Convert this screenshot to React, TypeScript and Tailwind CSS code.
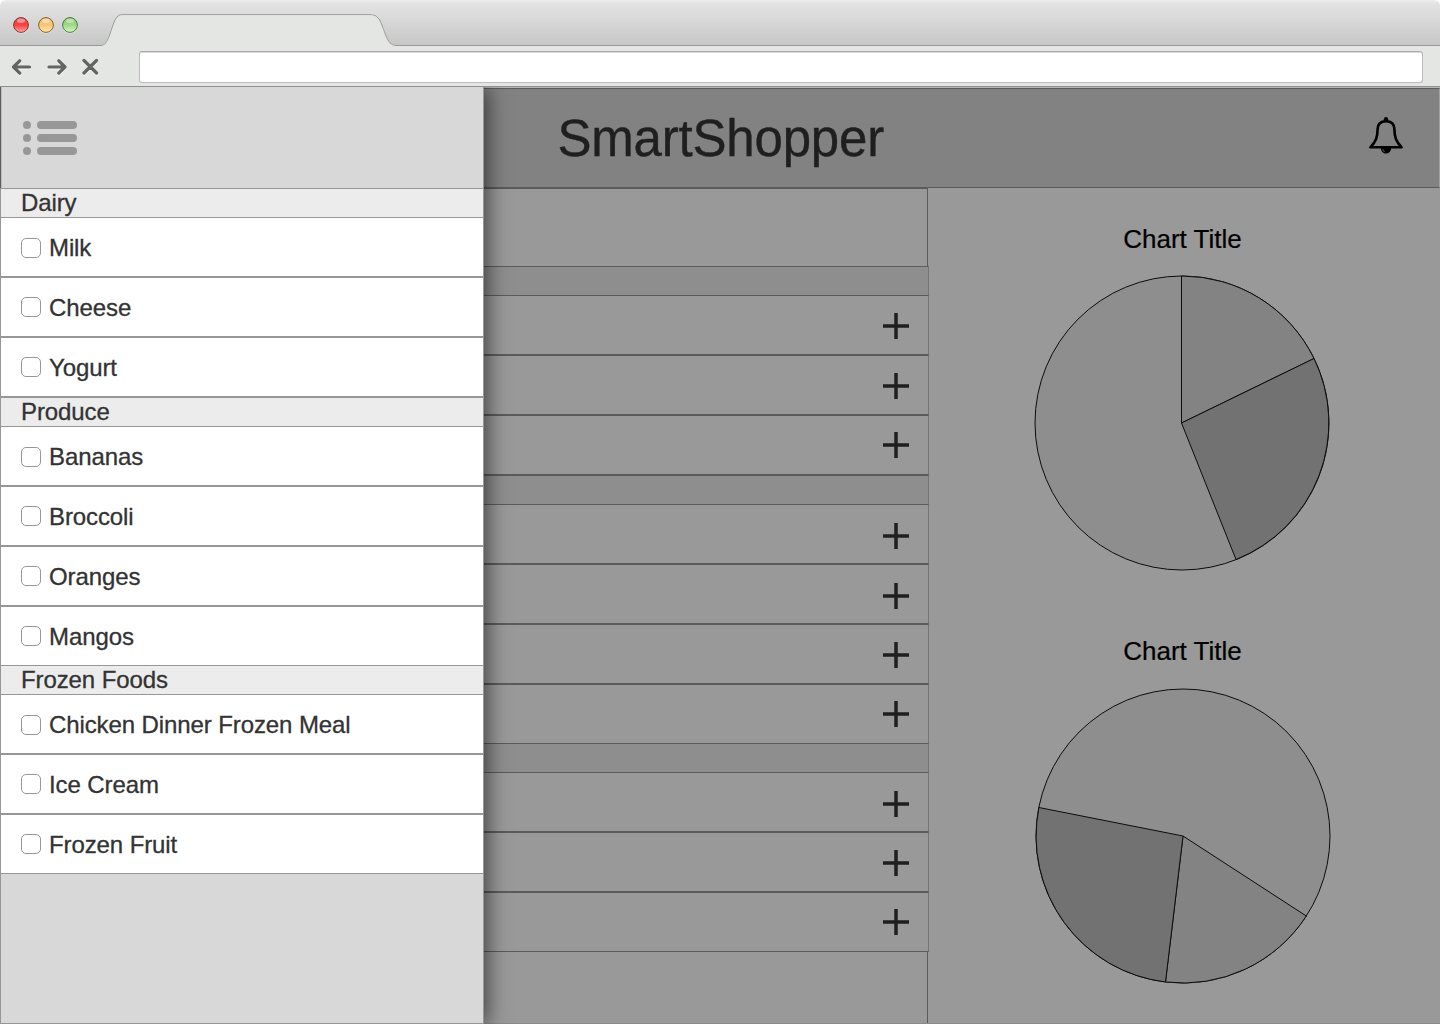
import React from "react";

type Section = { title: string; items: string[] };

const sections: Section[] = [
  { title: "Dairy", items: ["Milk", "Cheese", "Yogurt"] },
  { title: "Produce", items: ["Bananas", "Broccoli", "Oranges", "Mangos"] },
  { title: "Frozen Foods", items: ["Chicken Dinner Frozen Meal", "Ice Cream", "Frozen Fruit"] },
];

// Distance from the top of each catalog row to its add button.
const catalog: number[][] = [
  [17.5, 17.5, 16.5],
  [18.5, 18, 17.5, 16],
  [18, 17, 16],
];

function TrafficLight({ id, edge, top, mid, low }: { id: string; edge: string; top: string; mid: string; low: string }) {
  return (
    <svg width="18" height="18" viewBox="0 0 18 18">
      <defs>
        <linearGradient id={id} x1="0" y1="0" x2="0" y2="1">
          <stop offset="0" stopColor={top} />
          <stop offset="0.5" stopColor={mid} />
          <stop offset="1" stopColor={low} />
        </linearGradient>
      </defs>
      <circle cx="9" cy="10" r="7.6" fill="#fff" opacity="0.6" />
      <circle cx="9" cy="9" r="7.4" fill={`url(#${id})`} stroke={edge} strokeWidth="1" />
      <ellipse cx="9" cy="4.8" rx="4" ry="2.2" fill="#fff" opacity="0.4" />
    </svg>
  );
}

function BrowserChrome() {
  return (
    <div className="flex h-[87px] shrink-0 flex-col">
      <div className="relative flex h-[46px] items-center bg-white">
        <svg className="absolute inset-0" width="1440" height="46" viewBox="0 0 1440 46">
          <defs>
            <linearGradient id="titlebar" x1="0" y1="0" x2="0" y2="1">
              <stop offset="0" stopColor="#ececec" />
              <stop offset="0.08" stopColor="#e3e3e3" />
              <stop offset="1" stopColor="#c6c6c6" />
            </linearGradient>
          </defs>
          <path d="M0 46V6Q0 0 6 0H1434Q1440 0 1440 6V46Z" fill="url(#titlebar)" />
          <path
            d="M0 45.5H101C110 45.5 111 24 117 17Q118.600 14.700 122 14.700H371Q376 14.700 379 19C385 29 386 45.500 396 45.500H1440"
            fill="none"
            stroke="#999"
          />
          <path d="M101 46C110 46 112 24 117.500 17.500Q119 15.300 122 15.300H371Q375.500 15.300 378.500 19.500C384.500 29 385.500 46 396 46Z" fill="#e4e6e3" />
        </svg>
        <div className="relative ml-3 mt-[3px] flex gap-[6.500px]">
          <TrafficLight id="red" edge="#843434" top="#e05050" mid="#f93f3f" low="#ffabab" />
          <TrafficLight id="amber" edge="#80602f" top="#eebb72" mid="#fac675" low="#ffe6ad" />
          <TrafficLight id="green" edge="#4a7a3d" top="#8cc376" mid="#9fd889" low="#d5f8be" />
        </div>
      </div>
      <div className="flex h-[41px] items-center border-b border-[#8f8f8f] bg-[#e4e6e3] pl-3">
        <svg className="mt-[2px]" width="88" height="20" viewBox="12 57 88 20" fill="none" stroke="#646464" strokeWidth="3.200" strokeLinecap="round" strokeLinejoin="round">
          <g stroke="#fff" transform="translate(0 1)" opacity="0.7">
            <path d="M29.500 67H14M19.700 60.800L13.500 67L19.700 73.200M49 67H64.500M58.800 60.800L65 67L58.800 73.200M84 60.500L96.500 73M96.500 60.500L84 73" />
          </g>
          <path d="M29.500 67H14M19.700 60.800L13.500 67L19.700 73.200M49 67H64.500M58.800 60.800L65 67L58.800 73.200M84 60.500L96.500 73M96.500 60.500L84 73" />
        </svg>
        <div className="ml-[39px] mt-px h-8 w-[1284px] rounded-[3px] border border-[#bcbcbc] border-t-[#adadad] bg-white shadow-[inset_0_1px_0_#d8d8d8]" />
      </div>
    </div>
  );
}

function Drawer() {
  return (
    <aside className="relative z-10 flex w-[484px] shrink-0 flex-col shadow-[3px_1px_20px_rgba(0,0,0,0.6)]">
      <div className="flex h-[101px] border-l border-r border-l-[#5f5f5f] border-r-[#979797] bg-[#d8d8d8] pl-[22px] pt-[34px] shadow-[inset_1px_0_0_#bbb]">
        <div className="flex flex-col gap-[5px]">
          {[0, 1, 2].map((n) => (
            <div key={n} className="flex gap-[6px]">
              <span className="size-2 rounded-full bg-[#979797]" />
              <span className="h-2 w-10 rounded-full bg-[#979797]" />
            </div>
          ))}
        </div>
      </div>
      {sections.map((s, i) => (
        <section key={s.title} className={i === 2 ? "relative -mt-px" : "relative"}>
          <h2 className="h-[30px] border border-[#979797] bg-[#ececec] pl-5 text-[24px] leading-[28px] tracking-[-0.1px] text-[#333] [-webkit-text-stroke:0.3px_#333]">
            {s.title}
          </h2>
          <div className="-mt-px">
            {s.items.map((item, n) => (
              <label
                key={item}
                className="flex h-[60px] items-start border border-[#979797] bg-white pl-5 text-[24px] leading-[60px] tracking-[-0.1px] text-[#333] [-webkit-text-stroke:0.3px_#333]"
              >
                <span className={n === 0 ? "mt-5 size-5 rounded-[5px] border border-[#979797]" : "mt-[19px] size-5 rounded-[5px] border border-[#979797]"} />
                <span className="ml-2 h-[58px]">{item}</span>
              </label>
            ))}
          </div>
        </section>
      ))}
      <div className="flex-1 border-b border-l border-r border-[#979797] bg-[#d8d8d8]" />
    </aside>
  );
}

function Catalog() {
  return (
    <div className="w-[445px] shrink-0">
      <div className="mr-px h-[79px] border-r border-t border-[#5b5b5b]" />
      {catalog.map((rows, i) => (
        <section key={i} className={i === 1 ? "relative" : "relative -mt-px"}>
          <div className="h-[30px] border-y border-r border-[#5b5b5b] border-r-[#747474] bg-[#8e8e8e]" />
          <div className="-mt-px">
            {rows.map((top, n) => (
              <div key={n} className="flex h-[60px] justify-end border-y border-r border-[#5b5b5b] border-r-[#747474] pr-[18px]">
                <svg width="28" height="28" viewBox="-14 -14 28 28" style={{ marginTop: top - 1.5 }}>
                  <path d="M-13 0H13M0 -13V13" stroke="#1f1f1f" strokeWidth="3.500" />
                </svg>
              </div>
            ))}
          </div>
        </section>
      ))}
      <div className="mr-px h-[71px] border-r border-[#5b5b5b]" />
    </div>
  );
}

function Charts() {
  return (
    <div className="flex flex-1 flex-col items-center text-[26px] leading-[30px] text-black [-webkit-text-stroke:0.2px_#000]">
      <h3 className="ml-[-4px] mt-[36px]">Chart Title</h3>
      <svg className="ml-[-6px] mt-[20px]" width="298" height="298" viewBox="1033 274 298 298" stroke="#0c0c0c" strokeWidth="1">
        <circle cx="1182" cy="423" r="147" fill="#8e8e8e" />
        <path d="M1181.500 423V276A147 147 0 0 1 1314 358.500Z" fill="#838383" />
        <path d="M1181.500 423L1314 358.500A147 147 0 0 1 1236 559.500Z" fill="#727272" />
      </svg>
      <h3 className="ml-[-4px] mt-[64px]">Chart Title</h3>
      <svg className="ml-[-4px] mt-[21px]" width="298" height="298" viewBox="1034 687 298 298" stroke="#0c0c0c" strokeWidth="1">
        <circle cx="1183" cy="836" r="147" fill="#8e8e8e" />
        <path d="M1183 836L1306.300 916A147 147 0 0 1 1165.500 982Z" fill="#838383" />
        <path d="M1183 836L1165.500 982A147 147 0 0 1 1038.900 807.500Z" fill="#727272" />
      </svg>
    </div>
  );
}

function Bell() {
  return (
    <svg width="36" height="38" viewBox="0 0 36 38">
      <path d="M15.800 4.500V2.200Q16 0 18 0T20.200 2.200V4.500Z" fill="#000" />
      <path
        d="M18 4.200C13 4.200 9.700 6.800 9.600 12C9.600 20 8 24.500 2.400 30.300H33.600C28 24.500 26.400 20 26.400 12C26.300 6.800 23 4.200 18 4.200Z"
        fill="none"
        stroke="#000"
        strokeWidth="2.600"
        strokeLinejoin="round"
      />
      <path d="M12.800 31A5.200 5.600 0 0 0 23.200 31Z" fill="#000" />
      <path d="M14.800 32Q15.200 34.200 16.600 35" fill="none" stroke="#888" strokeWidth="0.700" />
    </svg>
  );
}

export default function App() {
  return (
    <div className="flex h-[1024px] w-[1440px] flex-col overflow-hidden bg-[#999] font-['Liberation_Sans',Arial,sans-serif]">
      <BrowserChrome />
      <div className="flex h-[937px] overflow-hidden">
        <Drawer />
        <div className="flex flex-1 flex-col border-t border-[#b5b5b5]">
          <header className="flex h-[100px] shrink-0 items-start justify-between border-y border-r border-[#5b5b5b] border-r-[#a3a3a3] bg-[#828282] pl-[73.5px] pr-[35px]">
            <h1 className="mt-[21px] text-[51px] leading-[57px] tracking-[-0.2px] text-[#1f1f1f] [-webkit-text-stroke:0.4px_#1f1f1f]">SmartShopper</h1>
            <div className="mt-7">
              <Bell />
            </div>
          </header>
          <main className="flex flex-1 border-b border-[#8a8a8a]">
            <Catalog />
            <Charts />
          </main>
        </div>
      </div>
    </div>
  );
}
